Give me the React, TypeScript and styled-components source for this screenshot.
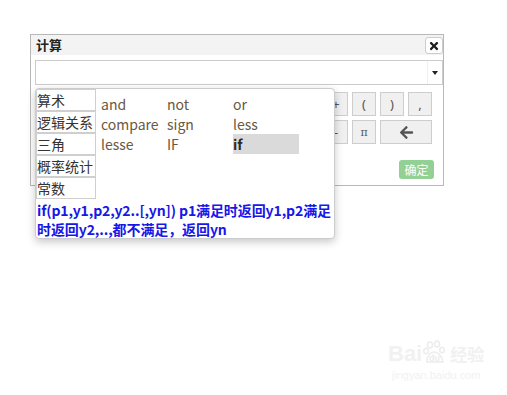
import React from "react";
import styled, { createGlobalStyle } from "styled-components";
import { FaTimes, FaArrowLeft } from "react-icons/fa";

const Global = createGlobalStyle`
  html, body { margin: 0; padding: 0; background: #fff; }
  body { font-family: "Noto Sans CJK SC", "Noto Sans", sans-serif; }
  * { box-sizing: border-box; }
`;

const Stage = styled.div`
  position: relative;
  width: 507px;
  height: 395px;
  padding: 34px 0 0 30px;
  overflow: hidden;
`;

const Dialog = styled.div`
  width: 414px;
  height: 152px;
  border: 1px solid #b8b8b8;
  background: #fff;
  display: flex;
  flex-direction: column;
`;

const TitleBar = styled.div`
  height: 20px;
  background: #f3f3f3;
  display: flex;
  justify-content: space-between;
  align-items: flex-start;
  padding-left: 5px;
`;

const Title = styled.div`
  font-size: 13px;
  font-weight: bold;
  line-height: 20px;
  color: #222;
`;

const CloseBtn = styled.div`
  width: 18px;
  height: 17px;
  margin-top: 2px;
  border: 1px solid #ccc;
  border-radius: 3px;
  background: #fff;
  display: flex;
  align-items: center;
  justify-content: center;
  color: #1e1e1e;
  position: relative;
  z-index: 1;
`;

const ComboWrap = styled.div`
  position: relative;
  margin: 5px 0 0 4px;
  z-index: 2;
`;

const Combo = styled.div`
  height: 25px;
  border: 1px solid #ccc;
  display: flex;
  justify-content: flex-end;
`;

const ArrowZone = styled.div`
  width: 15px;
  border-left: 1px solid #f0f0f0;
  display: flex;
  align-items: center;
  justify-content: center;
  &::after {
    content: "";
    border-left: 3.5px solid transparent;
    border-right: 3.5px solid transparent;
    border-top: 4px solid #222;
  }
`;

const Popup = styled.div`
  position: absolute;
  top: calc(100% + 3px);
  left: 0;
  width: 300px;
  height: 151px;
  background: #fff;
  border: 1px solid #ccc;
  border-radius: 4px;
  box-shadow: 0 3px 9px rgba(0, 0, 0, 0.22);
`;

const PopupTop = styled.div`
  display: flex;
  align-items: flex-start;
`;

const Categories = styled.div`
  width: 60px;
  display: flex;
  flex-direction: column;
`;

const Category = styled.div`
  height: 22px;
  border: 1px solid #cfcfcf;
  font-size: 14px;
  line-height: 20px;
  color: #333;
  white-space: nowrap;
`;

const FuncGrid = styled.div`
  margin: 5px 0 0 5px;
  display: grid;
  grid-template-columns: repeat(3, 66px);
  grid-auto-rows: 20px;
`;

const Func = styled.div<{ $active?: boolean }>`
  font-size: 14px;
  line-height: 20px;
  color: ${(p) => (p.$active ? "#2a2a2a" : "#6a5840")};
  font-weight: ${(p) => (p.$active ? "bold" : "normal")};
  background: ${(p) => (p.$active ? "#dadada" : "transparent")};
`;

const Desc = styled.div`
  padding: 2px 0 0 1px;
  font-size: 14px;
  line-height: 19px;
  font-weight: bold;
  color: #1717e8;
  letter-spacing: -0.1px;
`;

const DescLine = styled.div`
  white-space: nowrap;
`;

const Keypad = styled.div`
  margin-top: 7px;
  padding-right: 11px;
  display: grid;
  grid-template-columns: repeat(5, 24px);
  grid-auto-rows: 24px;
  gap: 4px;
  justify-content: end;
`;

const Key = styled.div<{ $span?: number; $serif?: boolean }>`
  grid-column: span ${(p) => p.$span || 1};
  background: #f0f0f0;
  border: 1px solid #cdcdcd;
  display: flex;
  align-items: center;
  justify-content: center;
  font-size: ${(p) => (p.$serif ? "11px" : "13px")};
  font-family: ${(p) => (p.$serif ? '"DejaVu Serif", serif' : '"Noto Sans", sans-serif')};
  color: #555;
`;

const Footer = styled.div`
  display: flex;
  justify-content: flex-end;
  padding: 16px 9px 0 0;
`;

const OkBtn = styled.div`
  width: 35px;
  height: 19px;
  border-radius: 3px;
  background: #93d094;
  color: #fff;
  font-size: 12px;
  line-height: 19px;
  text-align: center;
`;

const Watermark = styled.div`
  position: absolute;
  left: 388px;
  top: 340px;
  color: #f1f1f1;
  display: flex;
  flex-direction: column;
  align-items: center;
  pointer-events: none;
`;

const WmTop = styled.div`
  display: flex;
  align-items: flex-end;
  font-family: "Liberation Sans", sans-serif;
  font-weight: bold;
  font-size: 22px;
  line-height: 24px;
`;

const WmSite = styled.div`
  font-family: "Liberation Sans", sans-serif;
  font-size: 11px;
  line-height: 12px;
  margin-top: 3px;
`;

const WmCn = styled.span`
  font-family: "Noto Sans CJK SC", sans-serif;
  font-size: 17px;
  margin-left: 2px;
`;

const categories = ["算术", "逻辑关系", "三角", "概率统计", "常数"];
const funcs = ["and", "not", "or", "compare", "sign", "less", "lesse", "IF", "if"];

export default function App() {
  return (
    <Stage>
      <Global />
      <Dialog>
        <TitleBar>
          <Title>计算</Title>
          <CloseBtn>
            <FaTimes size={12} />
          </CloseBtn>
        </TitleBar>
        <ComboWrap>
          <Combo>
            <ArrowZone />
          </Combo>
          <Popup>
            <PopupTop>
              <Categories>
                {categories.map((c) => (
                  <Category key={c}>{c}</Category>
                ))}
              </Categories>
              <FuncGrid>
                {funcs.map((f) => (
                  <Func key={f} $active={f === "if"}>
                    {f}
                  </Func>
                ))}
              </FuncGrid>
            </PopupTop>
            <Desc>
              <DescLine>if(p1,y1,p2,y2..[,yn]) p1满足时返回y1,p2满足</DescLine>
              <DescLine>时返回y2,..,都不满足，返回yn</DescLine>
            </Desc>
          </Popup>
        </ComboWrap>
        <Keypad>
          <Key>*</Key>
          <Key>+</Key>
          <Key>(</Key>
          <Key>)</Key>
          <Key>,</Key>
          <Key>/</Key>
          <Key>-</Key>
          <Key $serif>π</Key>
          <Key $span={2}>
            <FaArrowLeft size={15} color="#555" />
          </Key>
        </Keypad>
        <Footer>
          <OkBtn>确定</OkBtn>
        </Footer>
      </Dialog>
      <Watermark>
        <WmTop>
          Bai
          <svg width="26" height="26" viewBox="0 0 26 26">
            <g fill="none" stroke="#ececec" strokeWidth="1.5">
              <ellipse cx="8" cy="5" rx="2.5" ry="3" />
              <ellipse cx="15" cy="4" rx="2.5" ry="3" />
              <ellipse cx="4" cy="11" rx="2.2" ry="2.8" />
              <ellipse cx="20" cy="10" rx="2.2" ry="2.8" />
              <path d="M5 22 C5 15 9 12 12 12 C15 12 20 15 21 22 Z" />
            </g>
            <text x="12.5" y="21" fontSize="9" textAnchor="middle" fill="#ececec" fontFamily="Liberation Sans">du</text>
          </svg>
          <WmCn>经验</WmCn>
        </WmTop>
        <WmSite>jingyan.baidu.com</WmSite>
      </Watermark>
    </Stage>
  );
}
